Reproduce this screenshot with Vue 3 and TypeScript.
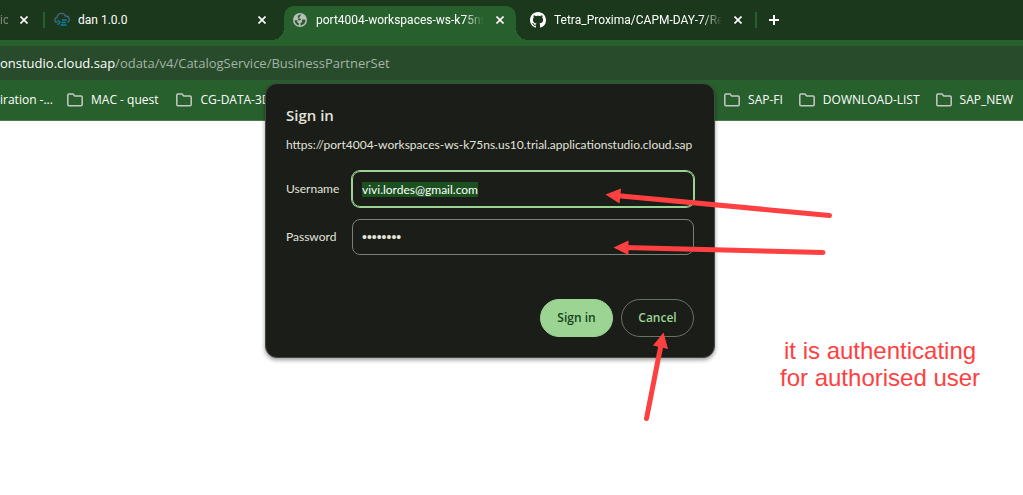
<script setup lang="ts">
import { onMounted, ref } from 'vue'

interface Tab {
  title: string
  icon: 'none' | 'cloud' | 'globe' | 'github'
  kind: string
}

const tabs: Tab[] = [
  { title: 'ic', icon: 'none', kind: 'cut' },
  { title: 'dan 1.0.0', icon: 'cloud', kind: 'wide' },
  { title: 'port4004-workspaces-ws-k75ns', icon: 'globe', kind: 'active' },
  { title: 'Tetra_Proxima/CAPM-DAY-7/Re', icon: 'github', kind: 'last' },
]
const leftMarks = ['MAC - quest', 'CG-DATA-3D']
const rightMarks = ['SAP-FI', 'DOWNLOAD-LIST', 'SAP_NEW']

const username = ref('vivi.lordes@gmail.com')
const password = ref('password')
const userField = ref<HTMLInputElement | null>(null)

onMounted(() => {
  userField.value?.focus()
  userField.value?.select()
})
</script>

<template>
  <div class="browser">
    <nav class="tabs" aria-label="Tabs">
      <div v-for="tab in tabs" :key="tab.title" class="tab" :class="tab.kind">
        <svg v-if="tab.icon === 'cloud'" class="favicon" viewBox="0 0 16 16" fill="none">
          <path d="M3.500 10.500C1.800 10.300.8 9.500.8 8c0-1.400 1-2.500 2.400-2.700C3.300 3 5 1.300 7.500 1.300c1.900 0 3.300 1 3.900 2.700 2.200 0 3.800 1.500 3.800 3.400 0 1.400-.6 2.500-1.700 3" stroke="#46697b" stroke-width="1.300" />
          <path d="M3.500 8 6 10.300 3.500 12.800M8 8h4.500M7.500 10.500h4.500M6.500 13h6" stroke="#0a80a8" stroke-width="1.300" />
        </svg>
        <svg v-else-if="tab.icon === 'globe'" class="favicon" viewBox="0 0 14 14">
          <circle cx="7" cy="7" r="7" fill="#b9bcb9" />
          <path d="M8.300 1.600C6.200 1.400 4.600 2.600 4.700 4c.1 1.200 1.700 1.100 2.600 1.500.9.400.7 1.500-.3 1.700-.9.200-1.400.1-2 .1L1.500 7.200c.2 2.600 1.800 4.500 4.200 5.200L6 10.600 4.300 9.300 4.200 7.500zM12.500 6.800 9.800 6.500C8.900 6.700 8.600 7.500 9 8.200c.3.600.1 1-.6 1.200-.9.200-1 .9-.9 1.500l.2 1.600c2.800-.3 4.900-2.600 4.800-5.700z" fill="#28602d" />
        </svg>
        <svg v-else-if="tab.icon === 'github'" class="favicon" viewBox="0 0 16 16" fill="#fff">
          <path d="M8 0C3.580 0 0 3.580 0 8c0 3.540 2.290 6.530 5.470 7.590.4.070.55-.17.55-.38 0-.19-.01-.82-.01-1.490-2.010.37-2.530-.49-2.690-.94-.09-.23-.48-.94-.82-1.130-.28-.15-.68-.52-.01-.53.63-.01 1.080.58 1.230.82.72 1.210 1.870.87 2.330.66.07-.52.28-.87.51-1.070-1.780-.2-3.640-.89-3.640-3.950 0-.87.31-1.590.82-2.150-.08-.2-.36-1.020.08-2.120 0 0 .67-.21 2.200.82.64-.18 1.320-.27 2-.27s1.360.09 2 .27c1.530-1.040 2.200-.82 2.200-.82.44 1.100.16 1.920.08 2.120.51.56.82 1.270.82 2.150 0 3.070-1.870 3.750-3.650 3.950.29.25.54.73.54 1.480 0 1.070-.01 1.930-.01 2.200 0 .21.15.46.55.38A8.010 8.010 0 0 0 16 8c0-4.420-3.580-8-8-8z" />
        </svg>
        <span class="title">{{ tab.title }}</span>
        <button class="close" type="button" aria-label="Close tab">
          <svg viewBox="0 0 8 8"><path d="M.5.5l7 7M7.500.5l-7 7" stroke="currentColor" stroke-width="1.600" /></svg>
        </button>
      </div>
      <button class="new-tab" type="button" aria-label="New tab">
        <svg viewBox="0 0 10 10"><path d="M5 0v10M0 5h10" stroke="currentColor" stroke-width="2" /></svg>
      </button>
    </nav>

    <div class="address"><span class="host">onstudio.cloud.sap</span>/odata/v4/CatalogService/BusinessPartnerSet</div>

    <div class="bookmarks">
      <span class="overflowed">iration -...</span>
      <button v-for="name in leftMarks" :key="name" class="mark" type="button">
        <svg viewBox="0 0 16 14"><path d="M2 1h4l1.700 2H14a1.200 1.200 0 0 1 1.200 1.200v7.300a1.200 1.200 0 0 1-1.200 1.200H2A1.200 1.200 0 0 1 .8 11.500V2.200A1.200 1.200 0 0 1 2 1z" /></svg>
        {{ name }}
      </button>
      <div class="mark-group">
        <button v-for="name in rightMarks" :key="name" class="mark" type="button">
          <svg viewBox="0 0 16 14"><path d="M2 1h4l1.700 2H14a1.200 1.200 0 0 1 1.200 1.200v7.300a1.200 1.200 0 0 1-1.200 1.200H2A1.200 1.200 0 0 1 .8 11.500V2.200A1.200 1.200 0 0 1 2 1z" /></svg>
          {{ name }}
        </button>
      </div>
    </div>

    <form class="dialog" role="dialog" aria-labelledby="heading" @submit.prevent>
      <h1 id="heading">Sign in</h1>
      <p class="origin">https://port4004-workspaces-ws-k75ns.us10.trial.applicationstudio.cloud.sap</p>
      <div class="fields">
        <label for="username">Username</label>
        <input id="username" ref="userField" v-model="username" type="text" />
        <label for="password">Password</label>
        <input id="password" v-model="password" type="password" />
      </div>
      <div class="actions">
        <button class="primary" type="submit">Sign in</button>
        <button class="secondary" type="button">Cancel</button>
      </div>
    </form>

    <svg class="arrows" width="1023" height="495" viewBox="0 0 1023 495">
      <g stroke="#ff4040" stroke-width="5" stroke-linecap="round">
        <path d="M616 195.500 829.500 215.500" />
        <path d="M624 247.500 823 252.500" />
        <path d="M661 345 646.500 418.500" />
      </g>
      <g fill="#ff4040">
        <path d="M605.500 194.500 621 188.500 619.500 203.500z" />
        <path d="M613.500 247.500 628.500 240.500 628.500 255z" />
        <path d="M663.500 332.500 653 345.500 668 349z" />
      </g>
    </svg>
    <p class="note">it is authenticating<br />for authorised user</p>
  </div>
</template>

<style>
body {
  margin: 0;
  background: #fff;
}
</style>

<style scoped>
.browser {
  position: relative;
  min-height: 100vh;
  overflow: hidden;
  color: #fff;
  font: 12px/16px "Open Sans", "Noto Sans", sans-serif;
}
button,
input {
  font: inherit;
  box-sizing: border-box;
}
.tabs {
  display: flex;
  height: 40px;
  background: #1b381c;
  font-family: Roboto, sans-serif;
}
.tab {
  position: relative;
  box-sizing: border-box;
  display: flex;
  flex: none;
  align-items: center;
  width: 241px;
  height: 34px;
  margin-top: 6px;
  padding: 0 15px 6px 14px;
}
.tab.cut {
  width: 43px;
  padding: 0 15px 6px 0;
}
.tab.cut .title {
  opacity: 0.4;
}
.tab.wide {
  padding: 0 18px 6px 11px;
}
.tab.wide::before,
.tab.last::after {
  content: "";
  position: absolute;
  top: 6px;
  left: 0;
  width: 2px;
  height: 16px;
  background: #28602d;
}
.tab.last::after {
  right: 0;
  left: auto;
}
.tab.active {
  width: 232px;
  padding: 0 12px 6px 9px;
  border-radius: 10px 10px 0 0;
  background: #28602d;
}
.tab.active::before,
.tab.active::after {
  content: "";
  position: absolute;
  bottom: 0;
  left: -12px;
  width: 12px;
  height: 12px;
  background: radial-gradient(circle at 0 0, transparent 12px, #28602d 12px);
}
.tab.active::after {
  right: -12px;
  left: auto;
  background: radial-gradient(circle at 100% 0, transparent 12px, #28602d 12px);
}
.favicon {
  flex: none;
  width: 16px;
  height: 16px;
  margin-right: 8px;
}
.active .favicon {
  width: 14px;
  height: 14px;
  margin-right: 9px;
}
.title {
  flex: 1;
  overflow: hidden;
  white-space: nowrap;
}
.active .title,
.last .title {
  mask-image: linear-gradient(to right, #000 calc(100% - 20px), transparent);
}
.close,
.new-tab {
  display: flex;
  flex: none;
  padding: 0;
  border: 0;
  background: none;
  color: #fff;
}
.close {
  width: 8px;
  margin-left: 12px;
}
.close svg {
  width: 8px;
  height: 8px;
}
.new-tab {
  align-self: center;
  width: 10px;
  margin-left: 12px;
}
.new-tab svg {
  width: 10px;
  height: 10px;
}
.address {
  height: 34px;
  border-top: 6px solid #28602d;
  background: #274b2b;
  color: #a3b5a4;
  font-size: 13px;
  line-height: 34px;
  white-space: nowrap;
}
.host {
  color: #fff;
}
.bookmarks {
  box-sizing: border-box;
  display: flex;
  align-items: center;
  gap: 18px;
  height: 41px;
  padding-right: 10px;
  border-bottom: 1px solid #4d7b50;
  background: #28602d;
}
.overflowed {
  width: 49px;
  white-space: nowrap;
}
.mark {
  display: flex;
  align-items: center;
  gap: 8px;
  padding: 0;
  border: 0;
  background: none;
  color: #fff;
  white-space: nowrap;
}
.mark svg {
  width: 16px;
  height: 14px;
  fill: none;
  stroke: #c3c8c3;
  stroke-width: 1.5;
}
.mark-group {
  display: flex;
  gap: 16px;
  margin-left: auto;
}
.dialog {
  position: absolute;
  top: 83px;
  left: 265px;
  box-sizing: border-box;
  width: 450px;
  padding: 21px 20px 20px;
  border: 1px solid #454945;
  border-radius: 12px;
  background: #1a1d18;
  box-shadow: 0 2px 4px #0006;
  color: #e2e3dc;
  font-family: Lato, sans-serif;
}
h1 {
  margin: 0;
  font: 600 15px/20px "Open Sans", sans-serif;
}
.origin {
  margin: 12px 0 18px;
  white-space: nowrap;
}
.fields {
  display: grid;
  grid-template-columns: 66px 1fr;
  row-gap: 12px;
  align-items: center;
}
.fields input {
  width: 100%;
  height: 36px;
  padding: 0 9px;
  border: 1px solid #7b8078;
  border-radius: 8px;
  outline: none;
  background: transparent;
  color: #e2e3dc;
}
.fields input[type="password"] {
  font: 14px/16px "Liberation Sans", Arial, sans-serif;
}
.fields input:focus {
  border-color: #9cd593;
  box-shadow: 0 0 0 1px #9cd593;
}
.fields input::selection {
  background: #1b501f;
  color: #fff;
}
.actions {
  display: flex;
  justify-content: flex-end;
  gap: 8px;
  margin-top: 44px;
}
.actions button {
  width: 73px;
  height: 38px;
  padding: 0;
  border: 1px solid #667463;
  border-radius: 19px;
  background: transparent;
  color: #9cd593;
  font: 600 12px/16px "Open Sans", sans-serif;
}
.actions .primary {
  border-color: #9cd593;
  background: #9cd593;
  color: #14421a;
}
.arrows {
  position: absolute;
  top: 0;
  left: 0;
  pointer-events: none;
}
.note {
  position: absolute;
  top: 337px;
  left: 780px;
  margin: 0;
  color: #ff4040;
  font: 24px/27px "Liberation Sans", Arial, sans-serif;
  text-align: center;
  white-space: nowrap;
}
</style>
